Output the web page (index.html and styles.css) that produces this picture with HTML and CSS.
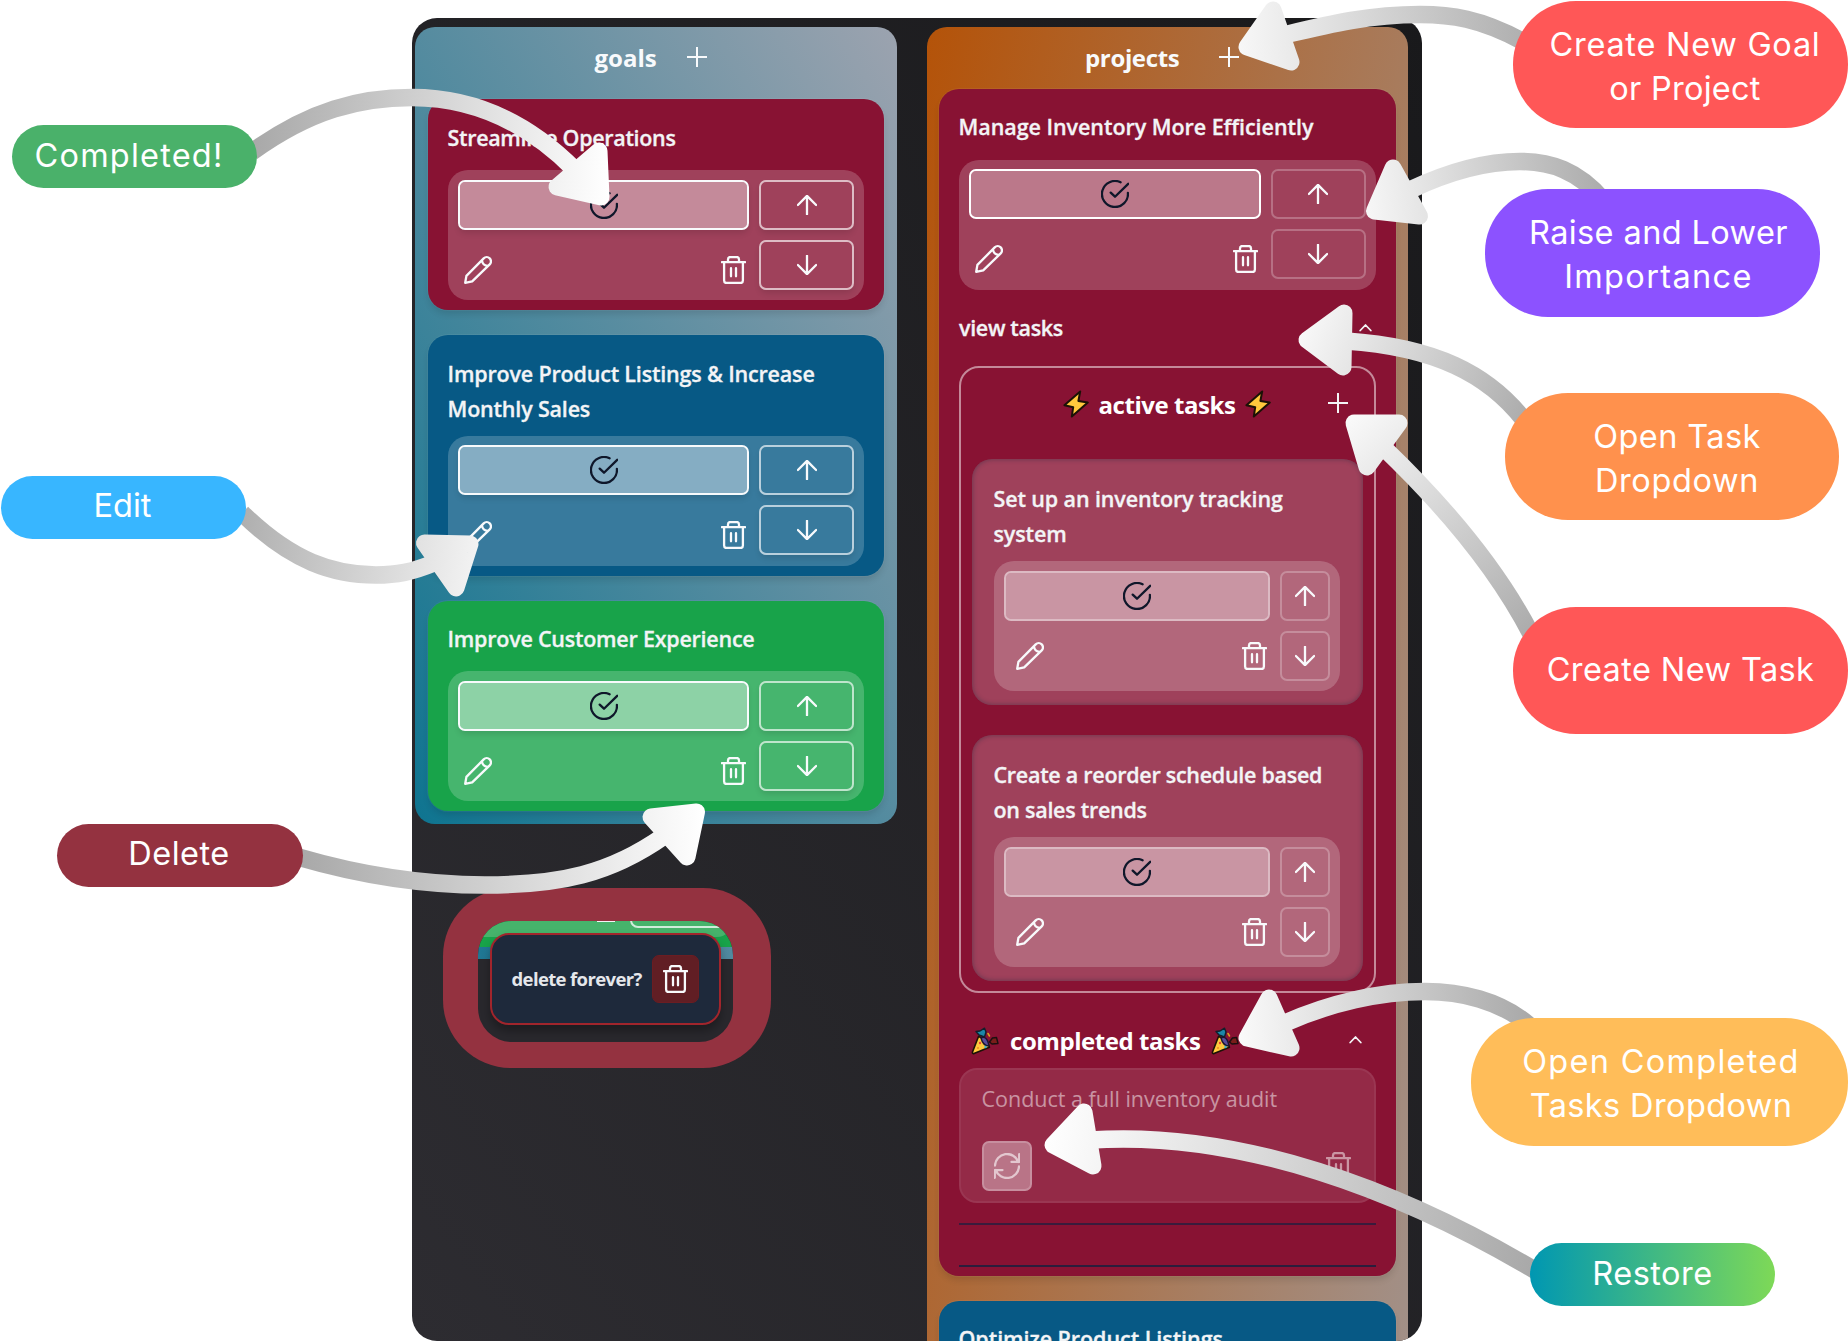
FILE: index.html
```html
<!DOCTYPE html>
<html lang="en">
<head>
<meta charset="utf-8">
<title>Goals and projects guide</title>
<link rel="stylesheet" href="styles.css">
</head>
<body>
<svg class="defs" width="0" height="0" aria-hidden="true">
  <symbol id="check" viewBox="0 0 28 28"><path d="M26.9 12.8A13 13 0 1 1 19.6 2.3M9.7 12.6L14 16.7L27.2 3.8"/></symbol>
  <symbol id="up" viewBox="0 0 20 20"><path d="M10 19.2V1M.9 10L10 .9L19.1 10"/></symbol>
  <symbol id="down" viewBox="0 0 20 20"><path d="M10 .8V19M.9 10L10 19.1L19.1 10"/></symbol>
  <symbol id="plus" viewBox="0 0 20 20"><path d="M10 .5V19.5M.5 10H19.5"/></symbol>
  <symbol id="pencil" viewBox="0 0 28 28"><path d="M1.2 26.8L2.4 19.9L19.7 2.4a4.1 4.1 0 0 1 6 6L8.2 25.3ZM18 4.6c.4 2.8 2.2 4.8 5.3 5.3"/></symbol>
  <symbol id="trash" viewBox="0 0 25 28"><path d="M.9 6.1H24.1M7 6V3.4Q7 1 9.3 1H15.7Q18 1 18 3.4V6M3.1 6.1V24.6Q3.1 27 5.5 27H19.5Q21.9 27 21.9 24.6V6.1M10 12.2V20.3M15 12.2V20.3"/></symbol>
  <symbol id="chevron" viewBox="0 0 13 9"><path d="M1.2 7.5L6.5 2L11.8 7.5"/></symbol>
  <symbol id="refresh" viewBox="0 0 26 26"><path d="M1 12.5A12 12 0 0 1 24.3 9M25.200 1.200V8.900H17.500M25 13.5A12 12 0 0 1 1.700 17M.800 24.800V17.100H8.500"/></symbol>
  <symbol id="bolt" viewBox="0 0 26 28"><path d="M17.2 1.4L1.4 15.2L10.2 17.2L8.8 26.6L24.8 12.6L15.4 11Z" fill="#ffc83d" stroke="#1b1206" stroke-width="2"/></symbol>
  <symbol id="party" viewBox="0 0 28 28">
    <path d="M7.5 9.5L1.4 25.2Q1.3 26.9 3 26.6L18.5 20.2Q16 12 7.5 9.5Z" fill="#ffc83d" stroke="#1b1206" stroke-width="1.6"/>
    <path d="M5 4.500L9 4L13.500 1.200L15 5L13.500 10L8 8Z" fill="#1c87a8" stroke="#10202c" stroke-width="1.4"/>
    <path d="M18.500 15L21.500 11L25.500 10.500L27 16.500L21 17Z" fill="#7a1d1a" stroke="#1b1010" stroke-width="1.4"/>
    <path d="M10 11Q16 8 18 19Q12 19 10 11Z" fill="#5b4c9a" stroke="#1b1630" stroke-width="1.400"/>
    <path d="M17 6.500L18.500 9" stroke="#d6a21c" stroke-width="1.600"/>
    <circle cx="9" cy="16" r="1.200" fill="#e8453c" stroke="none"/><circle cx="14.500" cy="20" r="1.200" fill="#35b6d8" stroke="none"/><circle cx="7" cy="21" r="1.100" fill="#f28c28" stroke="none"/>
  </symbol>
</svg>

<main class="stage">
  <section class="board">
    <div class="column goals">
      <header class="column-head"><h2>goals</h2><svg class="i20 thin"><use href="#plus"/></svg></header>

      <article class="card rose">
        <h3 class="t-stream">Streamline Operations</h3>
        <div class="tools">
          <button class="done"><svg class="i28"><use href="#check"/></svg></button>
          <button><svg class="i20"><use href="#up"/></svg></button>
          <div class="edit"><svg class="i28"><use href="#pencil"/></svg><svg class="trash"><use href="#trash"/></svg></div>
          <button><svg class="i20"><use href="#down"/></svg></button>
        </div>
      </article>

      <article class="card blue">
        <h3 class="double">Improve Product Listings &amp; Increase<br>Monthly Sales</h3>
        <div class="tools">
          <button class="done"><svg class="i28"><use href="#check"/></svg></button>
          <button><svg class="i20"><use href="#up"/></svg></button>
          <div class="edit"><svg class="i28"><use href="#pencil"/></svg><svg class="trash"><use href="#trash"/></svg></div>
          <button><svg class="i20"><use href="#down"/></svg></button>
        </div>
      </article>

      <article class="card green">
        <h3 class="t-customer">Improve Customer Experience</h3>
        <div class="tools">
          <button class="done"><svg class="i28"><use href="#check"/></svg></button>
          <button><svg class="i20"><use href="#up"/></svg></button>
          <div class="edit"><svg class="i28"><use href="#pencil"/></svg><svg class="trash"><use href="#trash"/></svg></div>
          <button><svg class="i20"><use href="#down"/></svg></button>
        </div>
      </article>
    </div>

    <div class="column projects">
      <header class="column-head"><h2>projects</h2><svg class="i20 thin"><use href="#plus"/></svg></header>

      <article class="card rose">
        <h3 class="t-manage">Manage Inventory More Efficiently</h3>
        <div class="tools soft">
          <button class="done"><svg class="i28"><use href="#check"/></svg></button>
          <button><svg class="i20"><use href="#up"/></svg></button>
          <div class="edit"><svg class="i28"><use href="#pencil"/></svg><svg class="trash"><use href="#trash"/></svg></div>
          <button><svg class="i20"><use href="#down"/></svg></button>
        </div>
        <div class="view-tasks"><span>view tasks</span><svg class="chev"><use href="#chevron"/></svg></div>

        <section class="active">
          <header class="active-head">
            <svg class="bolt"><use href="#bolt"/></svg><h4>active tasks</h4><svg class="bolt"><use href="#bolt"/></svg>
            <svg class="i20 thin add"><use href="#plus"/></svg>
          </header>
          <article class="task">
            <h3 class="double t-setup">Set up an inventory tracking<br>system</h3>
            <div class="tools small">
              <button class="done"><svg class="i28"><use href="#check"/></svg></button>
              <button><svg class="i20"><use href="#up"/></svg></button>
              <div class="edit"><svg class="i28"><use href="#pencil"/></svg><svg class="trash"><use href="#trash"/></svg></div>
              <button><svg class="i20"><use href="#down"/></svg></button>
            </div>
          </article>
          <article class="task">
            <h3 class="double t-reorder">Create a reorder schedule based<br>on sales trends</h3>
            <div class="tools small">
              <button class="done"><svg class="i28"><use href="#check"/></svg></button>
              <button><svg class="i20"><use href="#up"/></svg></button>
              <div class="edit"><svg class="i28"><use href="#pencil"/></svg><svg class="trash"><use href="#trash"/></svg></div>
              <button><svg class="i20"><use href="#down"/></svg></button>
            </div>
          </article>
        </section>

        <header class="completed-head">
          <svg class="i28"><use href="#party"/></svg><h4>completed tasks</h4><svg class="i28"><use href="#party"/></svg>
          <svg class="chev"><use href="#chevron"/></svg>
        </header>
        <article class="completed">
          <p>Conduct a full inventory audit</p>
          <div class="completed-row">
            <button class="restore"><svg class="i26"><use href="#refresh"/></svg></button>
            <svg class="trash"><use href="#trash"/></svg>
          </div>
        </article>
        <hr><hr class="last">
      </article>

      <article class="card blue"><h3 class="t-opt">Optimize Product Listings</h3></article>
    </div>
  </section>

  <aside class="confirm">
    <div class="confirm-view">
      <div class="strip-tools"></div><div class="strip-green"></div><div class="strip-teal"></div>
      <div class="peek-trash"></div><div class="peek-button"></div>
      <div class="popup"><span>delete forever?</span><button><svg class="trash"><use href="#trash"/></svg></button></div>
    </div>
  </aside>

  <svg class="arrows" width="1848" height="1342" viewBox="0 0 1848 1342">
    <defs>
      <linearGradient id="g1" gradientUnits="userSpaceOnUse" x1="255" y1="150" x2="609" y2="170"><stop stop-color="#a9a9a9"/><stop offset="1" stop-color="#fff"/></linearGradient>
      <linearGradient id="g2" gradientUnits="userSpaceOnUse" x1="220" y1="520" x2="520" y2="560"><stop stop-color="#a9a9a9"/><stop offset="1" stop-color="#fff"/></linearGradient>
      <linearGradient id="g3" gradientUnits="userSpaceOnUse" x1="303" y1="860" x2="704" y2="840"><stop stop-color="#a9a9a9"/><stop offset="1" stop-color="#fff"/></linearGradient>
      <linearGradient id="g4" gradientUnits="userSpaceOnUse" x1="1550" y1="30" x2="1228" y2="45"><stop stop-color="#a9a9a9"/><stop offset="1" stop-color="#fafafa"/></linearGradient>
      <linearGradient id="g5" gradientUnits="userSpaceOnUse" x1="1610" y1="175" x2="1355" y2="200"><stop stop-color="#a9a9a9"/><stop offset="1" stop-color="#fafafa"/></linearGradient>
      <linearGradient id="g6" gradientUnits="userSpaceOnUse" x1="1535" y1="420" x2="1290" y2="320"><stop stop-color="#a9a9a9"/><stop offset="1" stop-color="#fdfdfd"/></linearGradient>
      <linearGradient id="g7" gradientUnits="userSpaceOnUse" x1="1540" y1="635" x2="1345" y2="420"><stop stop-color="#a9a9a9"/><stop offset="1" stop-color="#fafafa"/></linearGradient>
      <linearGradient id="g8" gradientUnits="userSpaceOnUse" x1="1530" y1="1015" x2="1235" y2="1030"><stop stop-color="#a9a9a9"/><stop offset="1" stop-color="#fbfbfb"/></linearGradient>
      <linearGradient id="g9" gradientUnits="userSpaceOnUse" x1="1536" y1="1240" x2="1044" y2="1140"><stop stop-color="#a9a9a9"/><stop offset="1" stop-color="#fff"/></linearGradient>
    </defs>
    <g stroke="url(#g1)" fill="url(#g1)"><path class="tail" d="M252 152C310 110 360 97.500 412 97.500C477 97.500 530 125 574 169"/><path class="head" d="M599 151L601 197L557 187Z"/></g>
    <g stroke="url(#g2)" fill="url(#g2)"><path class="tail" d="M242 513C292 562 334 575 376 575C397 575 412 572 434 563"/><path class="head" d="M424.500 543L470 544L456 588Z"/></g>
    <g stroke="url(#g4)" fill="url(#g4)"><path class="tail" d="M1524 42C1480 18 1450 14.500 1420 14.500C1370 14.500 1330 24 1288 34"/><path class="head" d="M1273 10L1247 47L1291 62Z"/></g>
    <g stroke="url(#g5)" fill="url(#g5)"><path class="tail" d="M1604 201C1578 170 1550 161.500 1520 161.500C1485 161.500 1450 171 1410 190"/><path class="head" d="M1393 168L1374.500 211L1419.500 216Z"/></g>
    <g stroke="url(#g6)" fill="url(#g6)"><path class="tail" d="M1524 420C1488 374 1435 347 1346 341"/><path class="head" d="M1344 313L1307 340L1343 367Z"/></g>
    <g stroke="url(#g7)" fill="url(#g7)"><path class="tail" d="M1531 634Q1485 545 1384 448"/><path class="head" d="M1354 423L1399 423L1367 467Z"/></g>
    <g stroke="url(#g8)" fill="url(#g8)"><path class="tail" d="M1530 1026C1500 1000 1460 991.500 1425 991.500C1380 991.500 1330 1003 1285 1023"/><path class="head" d="M1269 998L1247 1038L1291 1048Z"/></g>
    <g stroke="url(#g9)" fill="url(#g9)"><path class="tail" d="M1536 1271C1400 1190 1240 1130 1090 1140"/><path class="head" d="M1084 1112L1053 1145L1093 1166Z"/></g>
    <g stroke="url(#g3)" fill="url(#g3)"><path class="tail" d="M298 857C370 878 430 885 485 885C560 885 610 874 664 836"/><path class="head" d="M651 817L696.500 812L687 857Z"/></g>
  </svg>

  <div class="pill p-completed"><span class="w-completed">Completed!</span></div>
  <div class="pill p-edit"><span>Edit</span></div>
  <div class="pill p-delete"><span class="w-delete">Delete</span></div>
  <div class="pill double-line p-create"><span class="w-create">Create New Goal</span><span class="w-or">or Project</span></div>
  <div class="pill double-line p-raise"><span class="w-raise">Raise and Lower</span><span class="w-imp">Importance</span></div>
  <div class="pill double-line p-open"><span class="w-open">Open Task</span><span class="w-drop">Dropdown</span></div>
  <div class="pill p-newtask"><span class="w-newtask">Create New Task</span></div>
  <div class="pill double-line p-opencomp"><span class="w-opencomp">Open Completed</span><span class="w-tasksdrop">Tasks Dropdown</span></div>
  <div class="pill p-restore"><span class="w-restore">Restore</span></div>
</main>
</body>
</html>
```
FILE: styles.css
```css
* { box-sizing: border-box; }
body { margin: 0; background: #fff; font-family: "Open Sans", "Noto Sans", sans-serif; }
h2, h3, h4, p { margin: 0; }
.defs { position: absolute; }
.stage { position: relative; width: 1848px; height: 1342px; overflow: hidden; padding: 18px 0 0 412px; }

.board {
  display: flex; align-items: flex-start; gap: 30px;
  width: 1010px; height: 1323px; padding: 8.500px 0 0 3px;
  border-radius: 25px; overflow: hidden;
  background: linear-gradient(to top right, #2d2c31, #19191b);
}
.column { width: 482px; padding: 0 13px 12.500px; border-radius: 20px; display: flex; flex-direction: column; gap: 25px; flex: none; }
.goals { background: linear-gradient(to top right, #0e7490, #9ca3af); }
.projects { width: 481px; height: 2500px; padding: 0 12.500px 0 12px; background: linear-gradient(to bottom right, #b45309, #9ca3af); }

.column-head { display: flex; align-items: center; height: 72.500px; margin-bottom: -25px; padding: 0 0 10px 166.500px; gap: 30px; color: #f8fafc; }
.projects .column-head { height: 62.500px; padding: 0 0 0 146px; gap: 39.500px; }
.column-head svg { margin-bottom: 2px; }
h2 { font-size: 24px; line-height: 30px; font-weight: 700; letter-spacing: 0; }
.projects h2 { letter-spacing: -.35px; }

svg { fill: none; stroke: currentColor; stroke-width: 2.300; stroke-linecap: round; stroke-linejoin: round; flex: none; overflow: visible; }
.i28 { width: 28px; height: 28px; }
.i26 { width: 26px; height: 26px; }
.i20 { width: 20px; height: 20px; }
.thin { stroke-width: 2; }
.trash { width: 25px; height: 28px; }
.chev { width: 13px; height: 9px; stroke-width: 1.800; }
.bolt { width: 26px; height: 28px; }

.card { padding: 20px 20px 9px; border-radius: 20px; color: #f3f4f6; box-shadow: 0 0 0 1px rgba(255,255,255,.05), 0 5px 7px -1px rgba(0,0,0,.12); }
.goals .card { padding-bottom: 10px; }
.rose { background: #881233; }
.blue { background: #075985; }
.green { background: #18a34a; }
h3 { position: relative; left: -.5px; font-size: 21.500px; line-height: 35px; font-weight: 600; letter-spacing: -.18px; margin-bottom: 16px; white-space: nowrap; }
h3, .view-tasks span { -webkit-text-stroke: .3px currentColor; }
h3.t-stream { letter-spacing: -.32px; }
h3.t-customer { letter-spacing: -.24px; }
h3.t-manage, h3.t-opt { letter-spacing: -.05px; }
h3.t-setup { letter-spacing: -.12px; }
h3.t-reorder { letter-spacing: -.28px; }
.goals h3 { padding-top: 1px; margin-bottom: 15px; }
.goals h3.double { margin-bottom: 9.500px; }
.goals h3.t-customer { padding-top: 0; margin-bottom: 15.500px; }

.tools { display: grid; grid-template-columns: 1fr 95px; grid-auto-rows: 50px; gap: 10px; padding: 9.500px 10px 10.500px; border-radius: 20px; background: rgba(255,255,255,.2); }
.tools.small { grid-template-columns: 1fr 50.500px; }
button { display: flex; align-items: center; justify-content: center; padding: 0; margin: 0; border: 2px solid rgba(255,255,255,.65); border-radius: 7px; background: transparent; color: #f8fafc; box-shadow: 0 4px 6px -1px rgba(0,0,0,.12); }
.done { border-color: #f8fafc; background: rgba(255,255,255,.39); background-clip: padding-box; color: #0f172a; }
.soft button, .small button { box-shadow: none; border-color: rgba(255,255,255,.25); }
.soft .done { border-color: #fff; background-color: rgba(255,255,255,.29); }
.small .done { border-color: rgba(255,255,255,.55); background-color: rgba(255,255,255,.3); }
.edit { display: flex; align-items: flex-end; justify-content: space-between; padding: 0 3px 6px 6px; color: #f8fafc; }
.small .edit { padding: 0 3px 11px 12px; }

.projects .card h3 { margin-bottom: 15.500px; }
.projects .card .double { margin-bottom: 10px; }
.view-tasks { display: flex; align-items: center; justify-content: space-between; height: 35px; margin: 20.500px 0; padding-right: 4px; font-size: 21.500px; font-weight: 600; letter-spacing: -.33px; }

.active { border: 2px solid rgba(255,255,255,.5); border-radius: 20px; padding: 0 10.500px 10.500px; }
.active-head { display: flex; align-items: center; height: 91px; padding: 0 0 17.500px 91px; gap: 10px; }
.active-head .add { margin: 0 15.500px 0 auto; position: relative; top: -1px; }
h4 { font-size: 24px; font-weight: 700; line-height: 35px; letter-spacing: -.45px; color: #fff; white-space: nowrap; }
.task { padding: 22.500px 23px 12.500px 22.500px; height: 246px; border-radius: 20px; background: rgba(255,255,255,.2); box-shadow: inset 0 0 4px 1px rgba(30,41,59,.35); }
.task + .task { margin-top: 30px; }

.completed-head { display: flex; align-items: center; gap: 11px; height: 75px; padding: 20.500px 14px 0 12px; }
.completed-head .chev { margin: 0 0 2px auto; }
.completed { height: 135px; border: 2px solid rgba(255,255,255,.06); border-radius: 18px; background: rgba(255,255,255,.1); padding: 10px 21px 10px 20.500px; color: rgba(255,255,255,.5); }
.completed p { font-size: 21.500px; line-height: 38px; letter-spacing: 0; }
.completed-row { display: flex; justify-content: space-between; align-items: center; margin-top: 23px; }
.completed-row .trash { margin-right: 2px; }
.restore { width: 50px; height: 50px; background: rgba(255,255,255,.35); border-color: rgba(255,255,255,.2); box-shadow: none; color: rgba(255,255,255,.6); }
hr { margin: 20px 0 0; border: 0; height: 2px; background: #3a1b3c; }
hr.last { margin-top: 39.500px; background: #2b1d3c; }

/* enlarged view of the delete confirmation */
.confirm { position: absolute; left: 443px; top: 888px; width: 328px; height: 180px; padding: 33px 38px 26px 34.500px; border-radius: 68px; background: #943240; }
.confirm-view { position: relative; height: 121px; border-radius: 34px; overflow: hidden; background: #29282d; }
.strip-tools { height: 16px; background: #18a34a; }
.strip-tools::before { content: ""; display: block; height: 16px; border-radius: 0 0 22px 0; background: #46b36b; }
.strip-green { height: 10px; background: #18a34a; }
.strip-teal { height: 12px; background: linear-gradient(90deg, #1f7794, #518aa0); }
.peek-trash { position: absolute; left: 119px; top: -1px; width: 18px; height: 2px; background: #f3f4f6; }
.peek-button { position: absolute; left: 152px; top: -20px; width: 96px; height: 27px; border: 2px solid rgba(255,255,255,.75); border-radius: 8px; }
.popup { position: absolute; left: 12.500px; top: 11.500px; width: 231px; height: 92px; border: 2px solid #a1252c; border-radius: 19px; background: #1e293b; display: flex; align-items: center; justify-content: space-between; padding: 0 20px 0 19.500px; color: #e5e7eb; font-size: 18.500px; font-weight: 700; letter-spacing: -.63px; white-space: nowrap; box-shadow: 0 6px 10px rgba(0,0,0,.3); }
.popup button { width: 47px; height: 48px; border: 1px solid #6b1d22; border-radius: 7px; background: #611e24; box-shadow: none; }

.arrows { position: absolute; left: 0; top: 0; }
.tail { fill: none; stroke-width: 17.500; stroke-linecap: butt; }
.head { stroke-width: 17; }

.pill { position: absolute; display: flex; flex-direction: column; align-items: center; justify-content: center; border-radius: 63px; color: #fff; font-family: Inter, sans-serif; font-size: 32.500px; line-height: 43.700px; white-space: nowrap; padding-bottom: 1px; }
.pill.double-line { padding-top: 4px; padding-bottom: 0; }
.p-completed { left: 12px; top: 125px; width: 245px; height: 63px; padding-right: 11px; background: #4ab16a; }
.p-edit { left: 1px; top: 476px; width: 245px; height: 63px; padding: 0 2px 3px 0; background: #38b6ff; }
.p-delete { left: 57px; top: 824px; width: 246px; height: 63px; padding: 0 2px 3px 0; background: #943240; }
.p-create { left: 1513px; top: 1px; width: 335px; height: 127px; padding-left: 9px; background: #ff5757; }
.p-raise { left: 1485px; top: 189px; width: 335px; height: 128px; padding-left: 12px; background: #8c52ff; }
.p-open { left: 1505px; top: 393px; width: 334px; height: 127px; padding-left: 10px; background: #ff914d; }
.p-newtask { left: 1513px; top: 607px; width: 335px; height: 127px; background: #ff5757; }
.p-opencomp { left: 1471px; top: 1018px; width: 377px; height: 128px; padding-left: 3px; background: #ffbd59; }
.p-restore { left: 1530px; top: 1243px; width: 245px; height: 63px; background: linear-gradient(90deg, #0097b2, #7ed957); }

.w-completed { letter-spacing: 1.200px; }
.w-delete, .w-restore { letter-spacing: .480px; }
.w-create { letter-spacing: .720px; }
.w-or { letter-spacing: .250px; }
.w-raise, .w-newtask { letter-spacing: .390px; }
.w-imp { letter-spacing: 1.350px; }
.w-open, .w-tasksdrop { letter-spacing: .380px; }
.w-drop { letter-spacing: .620px; }
.w-opencomp { letter-spacing: 1.280px; }
```
